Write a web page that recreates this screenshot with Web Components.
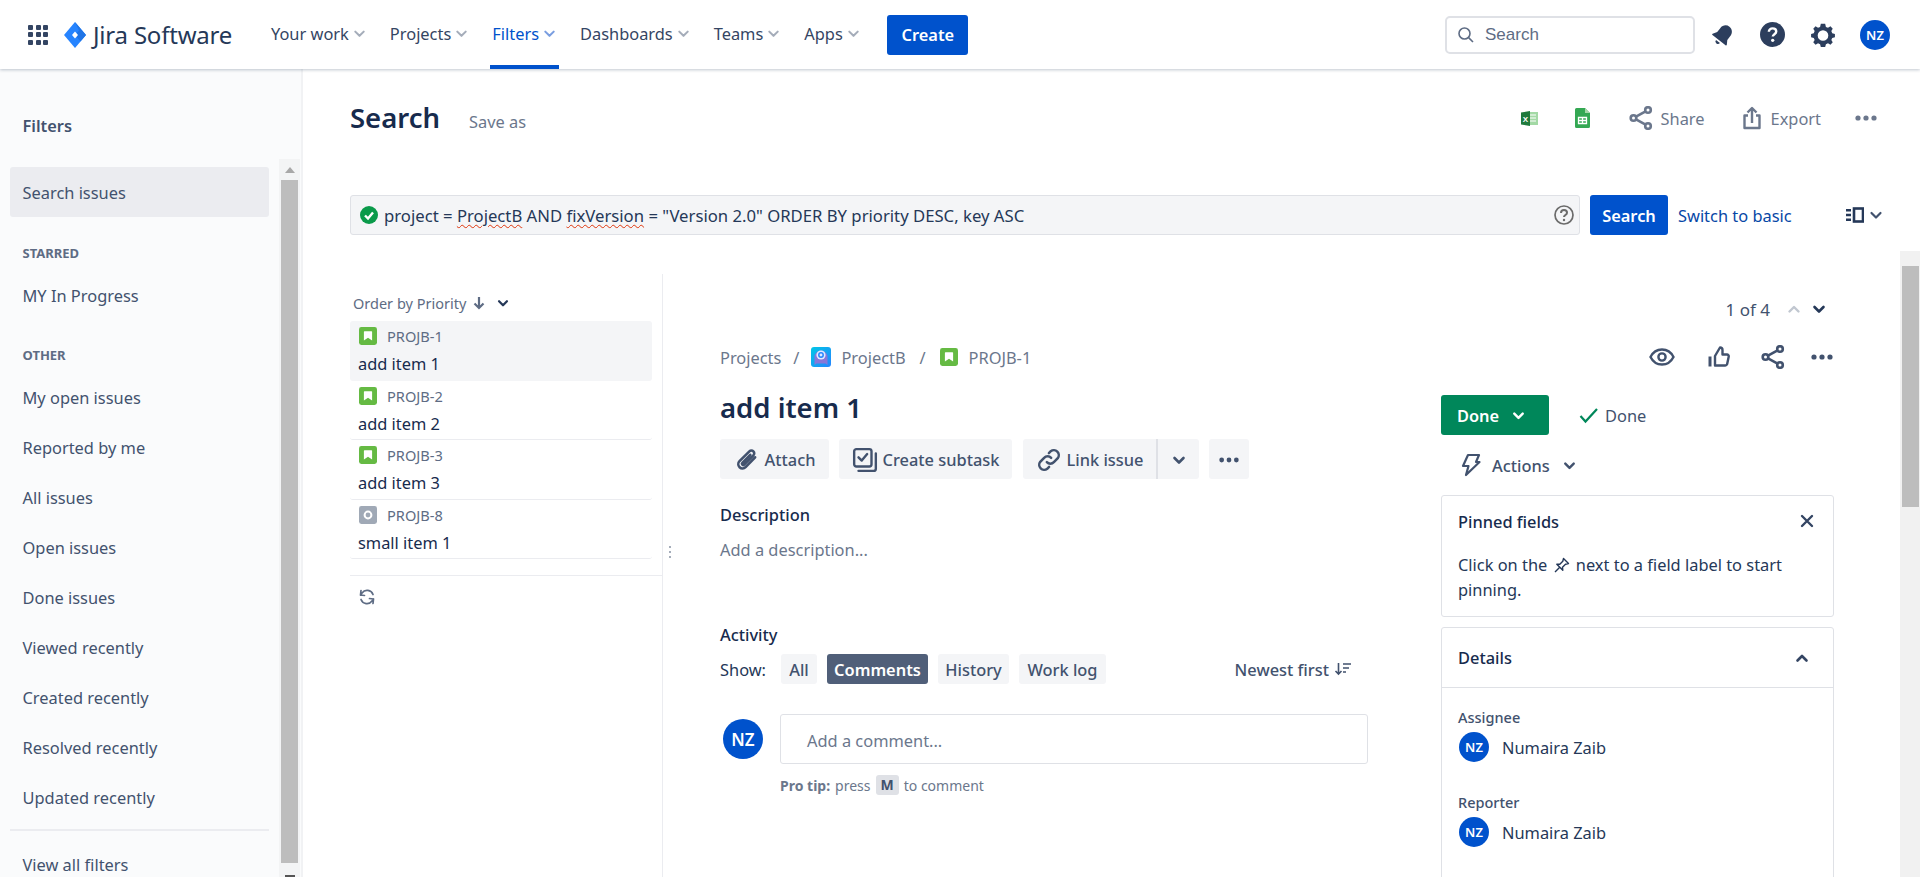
<!DOCTYPE html>
<html>
<head>
<meta charset="utf-8">
<title>Search - Jira</title>
<style>
  html, body { margin: 0; height: 100%; overflow: hidden; background: #fff; }
  body { font-family: "Noto Sans", "Open Sans", sans-serif; font-size: 16.4px; color: #172b4d; display: flex; flex-direction: column; }
  .workspace { flex: 1; display: flex; min-height: 0; }
</style>
</head>
<body>
  <top-nav></top-nav>
  <div class="workspace">
    <filter-sidebar></filter-sidebar>
    <search-page></search-page>
    <page-scrollbar></page-scrollbar>
  </div>

<script>
(() => {
  const chevron = (size = 16, color = "currentColor", width = 2.6, up = false) => `
    <svg width="${size}" height="${size}" viewBox="0 0 16 16" style="flex:none">
      <path d="${up ? "M3.5 10.5 8 6l4.5 4.5" : "M3.5 6 8 10.5 12.5 6"}" fill="none" stroke="${color}" stroke-width="${width}" stroke-linecap="round" stroke-linejoin="round"/>
    </svg>`;

  const dots = (color) => `
    <svg width="24" height="24" viewBox="0 0 24 24" style="flex:none"><g fill="${color}"><circle cx="4" cy="12" r="2.6"/><circle cx="12" cy="12" r="2.6"/><circle cx="20" cy="12" r="2.6"/></g></svg>`;

  const shareIcon = (color, w = 24) => `
    <svg width="${w}" height="${w}" viewBox="0 0 24 24" style="flex:none" fill="none" stroke="${color}" stroke-width="2.6">
      <circle cx="4.5" cy="12" r="2.8"/><circle cx="19" cy="4" r="2.8"/><circle cx="19" cy="20" r="2.8"/>
      <path d="M7 10.6 16.6 5.4M7 13.4l9.6 5.2"/>
    </svg>`;

  const storyIcon = (size = 18) => `
    <svg width="${size}" height="${size}" viewBox="0 0 18 18" style="flex:none">
      <rect width="18" height="18" rx="2.4" fill="#65ba43"/>
      <path d="M5.5 4.2h7a.6.6 0 0 1 .6.6v8.8L9 10.8l-4.1 2.8V4.8a.6.6 0 0 1 .6-.6z" fill="#fff"/>
    </svg>`;

  const taskIcon = `
    <svg width="18" height="18" viewBox="0 0 18 18" style="flex:none">
      <rect width="18" height="18" rx="2.4" fill="#a0a9b6"/>
      <circle cx="9" cy="9" r="3.4" fill="none" stroke="#fff" stroke-width="2"/>
    </svg>`;

  const avatar = (size, fontSize) => `
    <span style="width:${size}px;height:${size}px;border-radius:50%;background:#0052cc;color:#fff;display:inline-flex;align-items:center;justify-content:center;font-size:${fontSize}px;font-weight:600;flex:none">NZ</span>`;

  const define = (name, css, html) => customElements.define(name, class extends HTMLElement {
    connectedCallback() {
      if (this.shadowRoot) return;
      this.attachShadow({ mode: "open" }).innerHTML = `<style>${css}</style>${typeof html === "function" ? html(this) : html}`;
    }
  });

  define("nav-item", `
    :host { display: flex; align-items: center; height: 69px; box-sizing: border-box; padding: 2px 2px 0; gap: 3px; color: #344563; border-bottom: 4px solid transparent; font-size: 16.4px; }
    :host([active]) { color: #0052cc; border-bottom-color: #0052cc; }
    span { white-space: nowrap; }
  `, (el) => `<span><slot></slot></span>${chevron(15, el.hasAttribute("active") ? "#7a9ee0" : "#a5adba", 2.2)}`);

  define("top-nav", `
    :host { display: flex; align-items: center; height: 69px; flex: none; background: #fff; box-shadow: 0 1px 3px rgba(9,30,66,.25); position: relative; z-index: 2; }
    .grid { display: grid; grid-template-columns: repeat(3, 5px); gap: 2.5px; margin-left: 28px; }
    .grid i { width: 5px; height: 5px; background: #344563; border-radius: 1px; }
    .logo { display: flex; align-items: center; gap: 7px; margin-left: 16px; color: #253858; font-size: 24px; width: 188px; white-space: nowrap; letter-spacing: -.2px; }
    .items { display: flex; gap: 19px; margin-left: 17px; }
    .create { margin-left: 24.5px; width: 81px; height: 40px; border-radius: 3px; background: #0052cc; color: #fff; font-weight: 600; font-size: 16.4px; display: flex; align-items: center; justify-content: center; }
    .right { margin-left: auto; display: flex; align-items: center; margin-right: 30px; }
    .search { width: 250px; height: 38px; box-sizing: border-box; border: 2px solid #dfe1e6; border-radius: 5px; display: flex; align-items: center; gap: 10px; padding-left: 10px; color: #5e6c84; font-size: 17px; font-family: "Liberation Sans", sans-serif; margin-right: 16px; }
    .icons { display: flex; align-items: center; }
  `, `
    <div class="grid">${"<i></i>".repeat(9)}</div>
    <div class="logo">
      <svg width="22" height="26" viewBox="0 0 22 26">
        <path d="M11 0 22 13 11 26 0 13z" fill="#2684ff"/><path d="M11 0 22 13 16.5 19.5 11 13 15 8.5z" fill="#1f74e6"/><path d="M11 9.5 14 13l-3 3.5L8 13z" fill="#fff"/>
      </svg>
      <span>Jira Software</span>
    </div>
    <div class="items">
      <nav-item>Your work</nav-item>
      <nav-item>Projects</nav-item>
      <nav-item active>Filters</nav-item>
      <nav-item>Dashboards</nav-item>
      <nav-item>Teams</nav-item>
      <nav-item>Apps</nav-item>
    </div>
    <div class="create">Create</div>
    <div class="right">
      <div class="search">
        <svg width="18" height="18" viewBox="0 0 18 18" fill="none" stroke="#5e6c84" stroke-width="1.6"><circle cx="7.5" cy="7.5" r="5.5"/><path d="m11.6 11.6 4.4 4.4"/></svg>
        <span>Search</span>
      </div>
      <div class="icons">
        <svg width="24" height="24" viewBox="0 0 24 24"><g transform="rotate(38 12 12)"><path d="M12 1.5c-3.8 0-6.4 3-6.4 6.8v4.9L3 17.3c-.3.6.1 1.2.7 1.2h16.6c.6 0 1-.6.7-1.2l-2.600-4.100V8.300c0-3.800-2.600-6.800-6.400-6.800z" fill="#2c3e5d"/><path d="M9.500 20.200h5a2.500 2.500 0 0 1-5 0z" fill="#2c3e5d"/></g></svg>
        <svg style="margin-left:25px" width="25" height="25" viewBox="0 0 26 26"><circle cx="13" cy="13" r="13" fill="#2c3e5d"/><path d="M9.200 10.200c0-2.200 1.700-3.600 3.900-3.600s3.800 1.300 3.800 3.300c0 2.800-3.600 2.800-3.600 5.300" fill="none" stroke="#fff" stroke-width="2.500"/><circle cx="13.200" cy="19" r="1.700" fill="#fff"/></svg>
        <svg style="margin-left:25px" width="26" height="26" viewBox="0 0 24 24"><path fill="#2c3e5d" fill-rule="evenodd" d="M10 1.600h4l.7 2.900 1.900.8 2.300-1.300 2.100 2.200-1.300 2.200.8 1.900 2.500.7v3l-2.500.7-.8 1.900 1.300 2.200-2.100 2.200-2.300-1.300-1.900.8-.7 2.500h-4l-.7-2.500-1.900-.8-2.300 1.300-2.100-2.200 1.300-2.200-.8-1.900-2.500-.7v-3l2.500-.7.8-1.900-1.300-2.200 2.100-2.200 2.300 1.300 1.900-.8zM12 7.600a4.900 4.900 0 1 0 0 9.800 4.900 4.900 0 0 0 0-9.800z"/></svg>
        <span style="margin-left:24px;display:flex">${avatar(30, 13)}</span>
      </div>
    </div>
  `);

  define("side-link", `
    :host { display: flex; align-items: center; height: 50px; padding-left: 22.5px; color: #42526e; font-size: 16.4px; white-space: nowrap; }
  `, `<slot></slot>`);

  define("side-heading", `
    :host { display: block; padding-left: 22.5px; color: #5e6c84; font-size: 13px; font-weight: 700; line-height: 18px; }
  `, `<slot></slot>`);

  define("filter-sidebar", `
    :host { width: 303px; flex: none; box-sizing: border-box; background: #fafbfc; border-right: 2px solid #f1f2f4; display: flex; overflow: hidden; position: relative; }
    .col { width: 259px; margin-left: 10px; flex: none; }
    .title { padding: 45px 0 0 12.5px; height: 98px; box-sizing: border-box; line-height: 24px; font-weight: 600; color: #42526e; font-size: 16.4px; }
    .pill { background: #ebecf0; border-radius: 3px; height: 50px; margin: 0 0 27px; padding-left: 12.5px; }
    side-link, side-heading { margin-left: -10px; }
    .gap-a { height: 8px; }
    .gap-b { height: 26px; }
    hr { border: 0; height: 2px; background: #ebecf0; margin: 7px 0 0; }
    .last { height: 24px; margin-top: 21px; }
    .bar { position: absolute; left: 279px; top: 90px; bottom: 0; width: 21px; background: #f3f4f5; display: flex; flex-direction: column; align-items: center; }
    .up { height: 21px; flex: none; display: flex; align-items: center; justify-content: center; }
    .thumb { width: 17px; height: 683px; background: #bdbdbd; flex: none; }
    .tri { width: 0; height: 0; border: 5px solid transparent; border-bottom: 6px solid #a8a8a8; border-top: 0; }
    .down { width: 10px; height: 2px; background: #555; margin-top: 12px; }
  `, `
    <div class="col">
      <div class="title">Filters</div>
      <side-link class="pill">Search issues</side-link>
      <side-heading>STARRED</side-heading>
      <div class="gap-a"></div>
      <side-link>MY In Progress</side-link>
      <div class="gap-b"></div>
      <side-heading>OTHER</side-heading>
      <div class="gap-a"></div>
      <side-link>My open issues</side-link>
      <side-link>Reported by me</side-link>
      <side-link>All issues</side-link>
      <side-link>Open issues</side-link>
      <side-link>Done issues</side-link>
      <side-link>Viewed recently</side-link>
      <side-link>Created recently</side-link>
      <side-link>Resolved recently</side-link>
      <side-link>Updated recently</side-link>
      <hr>
      <side-link class="last">View all filters</side-link>
    </div>
    <div class="bar"><div class="up"><div class="tri"></div></div><div class="thumb"></div><div class="down"></div></div>
  `);

  define("page-scrollbar", `
    :host { width: 20px; flex: none; margin-top: 182px; background: #f1f1f1; display: flex; flex-direction: column; align-items: center; }
    .up { height: 15px; }
    .thumb { width: 17px; height: 241px; background: #bdbdbd; }
  `, `<div class="up"></div><div class="thumb"></div>`);

  define("issue-row", `
    :host { display: block; height: 59.4px; box-sizing: border-box; border-bottom: 1px solid #ebecf0; padding: 6px 8px 0; border-radius: 3px; }
    :host([selected]) { background: #f4f5f7; border-bottom-color: transparent; height: 60px; }
    .key { display: flex; align-items: center; gap: 10px; height: 18px; padding-left: 1px; color: #5e6c84; font-size: 14.6px; }
    .sum { font-size: 16.4px; line-height: 24px; margin-top: 7px; color: #172b4d; }
  `, (el) => `
    <div class="key">${el.getAttribute("type") === "task" ? taskIcon : storyIcon()}<span>${el.getAttribute("key")}</span></div>
    <div class="sum"><slot></slot></div>
  `);

  define("issue-list", `
    :host { display: flex; flex-direction: column; width: 313px; flex: none; box-sizing: border-box; border-right: 1px solid #ebecf0; }
    .order { display: flex; align-items: center; gap: 6px; height: 47px; padding: 11px 0 0 3px; box-sizing: border-box; color: #5e6c84; font-size: 14.5px; }
    .rows { width: 302px; }
    .foot { border-top: 1px solid #ebecf0; margin-top: 16px; padding: 12px 0 0 8px; }
  `, `
    <div class="order">
      <span>Order by Priority</span>
      <svg width="14" height="14" viewBox="0 0 14 14" fill="none" stroke="#5e6c84" stroke-width="2.2"><path d="M7 1v11M2.5 7.5 7 12l4.5-4.5"/></svg>
      <span style="margin-left:4px;display:flex">${chevron(14, "#253858", 2.6)}</span>
    </div>
    <div class="rows">
      <issue-row key="PROJB-1" selected>add item 1</issue-row>
      <issue-row key="PROJB-2">add item 2</issue-row>
      <issue-row key="PROJB-3">add item 3</issue-row>
      <issue-row key="PROJB-8" type="task">small item 1</issue-row>
    </div>
    <div class="foot">
      <svg width="18" height="18" viewBox="0 0 18 18" fill="none" stroke="#5e6c84" stroke-width="1.7" stroke-linecap="round" stroke-linejoin="round">
        <path d="M15 6.500A6.300 6.300 0 0 0 4 5L2.500 7M3 2.500 2.500 7 6.500 7.500"/><path d="M3 11.500A6.300 6.300 0 0 0 14 13l1.500-2M15 15.500l.5-4.500-4-.5"/>
      </svg>
    </div>
  `);

  define("tool-button", `
    :host { display: flex; align-items: center; justify-content: center; gap: 5px; height: 40px; background: #f4f5f7; border-radius: 3px; color: #42526e; font-weight: 500; font-size: 16.4px; white-space: nowrap; box-sizing: border-box; padding-top: 1px; }
  `, `<slot></slot>`);

  define("activity-tab", `
    :host { display: flex; align-items: center; justify-content: center; height: 30px; background: #f4f5f7; border-radius: 3px; color: #42526e; font-weight: 500; font-size: 16.4px; }
    :host([active]) { background: #505f79; color: #fff; font-weight: 600; }
  `, `<slot></slot>`);

  define("issue-main", `
    :host { display: block; width: 648px; flex: none; }
    .crumbs { display: flex; align-items: center; height: 26px; box-sizing: border-box; padding-bottom: 2px; color: #6b778c; font-size: 16.4px; }
    .crumbs .sep { text-align: center; }
    h1 { margin: 17px 0 0; font-size: 27.5px; font-weight: 600; line-height: 40px; color: #172b4d; }
    .tools { display: flex; gap: 10px; margin-top: 11px; }
    .join { display: flex; margin-left: 1px; }
    h2 { margin: 0; font-size: 16.4px; font-weight: 500; line-height: 24px; color: #172b4d; }
    .desc { color: #6b778c; line-height: 24px; margin-top: 11px; }
    .show { display: flex; align-items: center; margin-top: 7px; height: 30px; }
    .show .lbl { width: 61px; color: #253858; }
    .tabs { display: flex; gap: 10px; }
    .newest { margin-left: auto; display: flex; align-items: center; gap: 5px; color: #42526e; font-weight: 500; margin-right: 16px; }
    .comment { display: flex; margin-top: 30px; }
    .box { margin-left: 17px; width: 589px; height: 50px; box-sizing: border-box; border: 1px solid #dfe1e6; border-radius: 3px; padding: 2px 0 0 26px; display: flex; align-items: center; color: #6b778c; }
    .tip { margin: 10px 0 0 60px; height: 22px; display: flex; align-items: center; gap: 5px; font-size: 14px; color: #6b778c; }
    kbd { font: inherit; font-weight: 700; background: #dfe1e6; color: #42526e; border-radius: 3px; padding: 0 5px; height: 20px; line-height: 20px; }
    b { font-weight: 700; }
  `, `
    <div class="crumbs">
      <span>Projects</span><span class="sep" style="width:30px">/</span>
      <svg width="20" height="20" viewBox="0 0 20 20" style="flex:none;margin-right:10px">
        <defs><linearGradient id="pb" x1="0" y1="0" x2="1" y2="1"><stop offset="0" stop-color="#00c7e6"/><stop offset="1" stop-color="#2684ff"/></linearGradient></defs>
        <rect width="20" height="20" rx="3" fill="url(#pb)"/>
        <path d="M3.500 18V10a6.500 6.500 0 0 1 13 0v8l-2-1.500h-9z" fill="#8777d9"/>
        <circle cx="10" cy="8" r="4.600" fill="#deebff"/><circle cx="10" cy="8" r="2.200" fill="none" stroke="#2684ff" stroke-width="1.500"/>
      </svg>
      <span>ProjectB</span><span class="sep" style="width:34px">/</span>
      ${storyIcon(18)}
      <span style="margin-left:11px">PROJB-1</span>
    </div>
    <h1>add item 1</h1>
    <div class="tools">
      <tool-button style="width:109px">
        <svg width="26" height="26" viewBox="0 0 24 24" fill="none" stroke="#42526e" stroke-width="2.400" stroke-linecap="round"><path d="M19.500 9.500 10.700 18.600a3.900 3.900 0 0 1-5.600-5.500L14.200 4a2.600 2.600 0 0 1 3.700 3.700L9.400 16.300a1.200 1.200 0 0 1-1.700-1.700L15 7.200"/></svg>
        Attach
      </tool-button>
      <tool-button style="width:173px">
        <svg width="26" height="26" viewBox="0 0 24 24" fill="none" stroke="#42526e" stroke-width="2.200" stroke-linejoin="round"><rect x="2" y="2" width="16" height="16" rx="2"/><path d="m6 9.500 3 3 5-6M22 6v14a2 2 0 0 1-2 2H6" stroke-linecap="round"/></svg>
        Create subtask
      </tool-button>
      <div class="join">
        <tool-button style="width:135px;border-right:2px solid #dfe1e6;border-radius:3px 0 0 3px">
          <svg width="26" height="26" viewBox="0 0 24 24" fill="none" stroke="#42526e" stroke-width="2.300" stroke-linecap="round"><path d="M10 14a4.500 4.500 0 0 0 6.500 0l3.600-3.700a4.600 4.600 0 0 0-6.500-6.400l-1.700 1.700"/><path d="M14 10a4.500 4.500 0 0 0-6.500 0l-3.600 3.700a4.600 4.600 0 0 0 6.500 6.400l1.700-1.700"/></svg>
          Link issue
        </tool-button>
        <tool-button style="width:41px;border-radius:0 3px 3px 0">${chevron(16, "#42526e", 2.6)}</tool-button>
      </div>
      <tool-button style="width:40px"><svg width="22" height="22" viewBox="0 0 24 24"><g fill="#42526e"><circle cx="4" cy="12" r="2.600"/><circle cx="12" cy="12" r="2.600"/><circle cx="20" cy="12" r="2.600"/></g></svg></tool-button>
    </div>
    <h2 style="margin-top:24px">Description</h2>
    <div class="desc">Add a description...</div>
    <h2 style="margin-top:61px">Activity</h2>
    <div class="show">
      <span class="lbl">Show:</span>
      <div class="tabs">
        <activity-tab style="width:36px">All</activity-tab>
        <activity-tab style="width:101px" active>Comments</activity-tab>
        <activity-tab style="width:71px">History</activity-tab>
        <activity-tab style="width:87px">Work log</activity-tab>
      </div>
      <div class="newest">
        Newest first
        <svg width="18" height="18" viewBox="0 0 18 18" fill="none" stroke="#42526e" stroke-width="1.600"><path d="M4.500 3v11M1.500 11l3 3 3-3M9 4h8M9 8h6M9 12h3"/></svg>
      </div>
    </div>
    <div class="comment">
      <span style="margin:5px 0 0 3px;display:flex">${avatar(40, 17)}</span>
      <div class="box">Add a comment...</div>
    </div>
    <div class="tip"><b>Pro tip:</b> press <kbd>M</kbd> to comment</div>
  `);

  define("field-person", `
    :host { display: block; }
    .lbl { font-size: 14.5px; color: #42526e; line-height: 20px; font-weight: 500; }
    .who { display: flex; align-items: center; gap: 13px; margin: 5px 0 0 1px; color: #253858; font-size: 16.4px; }
  `, (el) => `<div class="lbl">${el.getAttribute("label")}</div><div class="who">${avatar(30, 13)}<slot></slot></div>`);

  define("issue-side", `
    :host { display: block; width: 393px; flex: none; margin-left: 73px; }
    .acts { display: flex; justify-content: flex-end; align-items: center; height: 24px; }
    .status { display: flex; align-items: center; margin-top: 26px; }
    .done { width: 108px; height: 40px; background: #00875a; color: #fff; border-radius: 3px; display: flex; align-items: center; gap: 12px; padding-left: 16px; box-sizing: border-box; font-weight: 600; }
    .res { display: flex; align-items: center; gap: 6px; margin-left: 30px; color: #42526e; }
    .actions { display: flex; align-items: center; height: 24px; margin: 18px 0 0 20px; color: #42526e; font-weight: 500; }
    .card { border: 1px solid #dfe1e6; border-radius: 3px; box-sizing: border-box; }
    .pinned { margin-top: 18px; height: 122px; padding: 13px 19px 13px 16px; }
    .head { display: flex; justify-content: space-between; align-items: center; font-weight: 500; height: 24px; color: #172b4d; }
    .pinned p { margin: 20px 0 0; line-height: 24.5px; color: #253858; }
    .details { margin-top: 10px; height: 400px; }
    .details .head { height: 59px; padding: 0 23px 0 16px; border-bottom: 1px solid #dfe1e6; }
    .fields { padding: 19px 16px; display: flex; flex-direction: column; gap: 30px; }
  `, `
    <div class="acts">
      <svg style="margin-right:33px" width="26" height="26" viewBox="0 0 26 26" fill="none" stroke="#42526e" stroke-width="2.400"><path d="M1.500 13C4 8 8 5.500 13 5.500S22 8 24.500 13C22 18 18 20.500 13 20.500S4 18 1.500 13z"/><circle cx="13" cy="13" r="3.600"/></svg>
      <svg style="margin-right:31px" width="22" height="24" viewBox="0 0 22 24" fill="none" stroke="#42526e" stroke-width="2.400" stroke-linejoin="round"><path d="M7 11 12 2.500c1.500 0 2.500 1 2.500 2.500v4.500H19a1.800 1.800 0 0 1 1.700 2.200l-1.600 7.500a2 2 0 0 1-2 1.300H7z"/><path d="M2 11.500v10" stroke-width="3"/></svg>
      <span style="margin-right:25px;display:flex">${shareIcon("#42526e", 24)}</span>
      ${dots("#42526e")}
    </div>
    <div class="status">
      <div class="done">Done ${chevron(15, "#fff", 2.6)}</div>
      <div class="res">
        <svg width="20" height="20" viewBox="0 0 20 20" fill="none" stroke="#00875a" stroke-width="2.200"><path d="m1.500 11 5 5.500L18 4"/></svg>
        Done
      </div>
    </div>
    <div class="actions">
      <svg width="20" height="24" viewBox="0 0 20 24" fill="none" stroke="#42526e" stroke-width="2.200" stroke-linejoin="round"><path d="M7 2h11l-3 7h3.500L5 22l2.500-9H2z"/></svg>
      <span style="margin-left:11px">Actions</span>
      <span style="margin-left:12px;display:flex">${chevron(15, "#42526e", 2.6)}</span>
    </div>
    <div class="card pinned">
      <div class="head">Pinned fields
        <svg width="14" height="14" viewBox="0 0 14 14" stroke="#344563" stroke-width="2.400" stroke-linecap="round"><path d="m2 2 10 10M12 2 2 12"/></svg>
      </div>
      <p>Click on the
        <svg width="16" height="16" viewBox="0 0 16 16" fill="none" stroke="#253858" stroke-width="1.400" stroke-linejoin="round" style="vertical-align:-2px;margin:0 2px"><path d="m9.500 1.500 5 5-3 .8-3 3 .3 3L2.800 7.300l3-.1 3-3zM5.500 10.500 1 15"/></svg>
        next to a field label to start pinning.</p>
    </div>
    <div class="card details">
      <div class="head">Details ${chevron(16, "#344563", 2.6, true)}</div>
      <div class="fields">
        <field-person label="Assignee">Numaira Zaib</field-person>
        <field-person label="Reporter">Numaira Zaib</field-person>
      </div>
    </div>
  `);

  define("issue-detail", `
    :host { display: block; flex: 1; min-width: 0; position: relative; padding-left: 57px; overflow: hidden; }
    .pager { display: flex; justify-content: flex-end; align-items: center; gap: 16px; height: 26px; margin: 22px 0 23px; padding-right: 73px; color: #42526e; font-size: 17px; }
    .cols { display: flex; }
    .grip { position: absolute; left: 6px; top: 272px; display: grid; gap: 3px; }
    .grip i { width: 2px; height: 2px; background: #a5adba; }
  `, `
    <div class="grip"><i></i><i></i><i></i></div>
    <div class="pager">
      <span>1 of 4</span>
      <span style="display:flex;gap:9px">${chevron(16, "#c1c7d0", 2.4, true)}${chevron(16, "#253858", 2.6)}</span>
    </div>
    <div class="cols">
      <issue-main></issue-main>
      <issue-side></issue-side>
    </div>
  `);

  define("search-page", `
    :host { flex: 1; min-width: 0; display: flex; flex-direction: column; padding-left: 47px; overflow: hidden; }
    .head { display: flex; align-items: center; height: 42px; margin-top: 28px; flex: none; }
    h1 { margin: 0; font-size: 27.5px; font-weight: 600; color: #172b4d; line-height: 42px; }
    .save { margin: 7px 0 0 29px; color: #6b778c; font-size: 16.4px; }
    .tools { margin-left: auto; display: flex; align-items: center; color: #6b778c; padding-right: 22px; }
    .jql { display: flex; align-items: center; margin-top: 56px; height: 40px; flex: none; }
    .input { width: 1230px; height: 40px; box-sizing: border-box; background: #f4f5f7; border: 1px solid #dfe1e6; border-radius: 3px; display: flex; align-items: center; padding: 0 5px 0 9px; gap: 6px; color: #253858; white-space: nowrap; font-size: 16.7px; }
    .input u { text-decoration: underline wavy #de350b 1px; text-underline-offset: 2px; }
    .input svg:last-child { margin-left: auto; }
    .btn { width: 78px; height: 40px; margin-left: 10px; background: #0052cc; color: #fff; font-weight: 600; border-radius: 3px; display: flex; align-items: center; justify-content: center; }
    .basic { color: #0747a6; margin-left: 10px; }
    .view { margin-left: auto; margin-right: 16px; display: flex; align-items: center; gap: 4px; }
    .split { display: flex; flex: 1; margin-top: 39px; min-height: 0; }
  `, `
    <div class="head">
      <h1>Search</h1>
      <span class="save">Save as</span>
      <div class="tools">
        <svg width="17" height="17" viewBox="0 0 17 17"><rect x="6" y="2" width="11" height="13" fill="#a3d9a5"/><path d="M9 5h6M9 8h6M9 11h6" stroke="#fff"/><path d="M0 2.500 9 1v15L0 14.500z" fill="#1f7a3d"/><text x="1.700" y="11.500" font-size="8" font-weight="700" fill="#fff" font-family="Liberation Sans">X</text></svg>
        <svg style="margin-left:37px" width="15" height="20" viewBox="0 0 15 20"><path d="M1.500 0H10l5 5v13.500a1.500 1.500 0 0 1-1.500 1.500h-12A1.500 1.500 0 0 1 0 18.500v-17A1.500 1.500 0 0 1 1.500 0z" fill="#34a853"/><path d="M10 0v5h5z" fill="#a5d6a7"/><path d="M3.500 9.500h8v6h-8zM3.500 12.500h8M7.500 9.500v6" fill="none" stroke="#fff" stroke-width="1.300"/></svg>
        <span style="margin-left:39px;display:flex">${shareIcon("#6b778c", 24)}</span>
        <span style="margin-left:8px">Share</span>
        <svg style="margin-left:38px" width="18" height="24" viewBox="0 0 18 24" fill="none" stroke="#6b778c" stroke-width="2.400" stroke-linejoin="round"><path d="M5 9.500H1.500v12.500h15V9.500H13"/><path d="M9 17V2M4.500 6.500 9 2l4.500 4.500"/></svg>
        <span style="margin-left:10px">Export</span>
        <span style="margin-left:33px;display:flex">${dots("#6b778c")}</span>
      </div>
    </div>
    <div class="jql">
      <div class="input">
        <svg width="18" height="18" viewBox="0 0 18 18" style="flex:none"><circle cx="9" cy="9" r="9" fill="#0a9a4a"/><path d="m5 9.500 3 3 5-6" fill="none" stroke="#fff" stroke-width="2.400"/></svg>
        <span>project = <u>ProjectB</u> AND <u>fixVersion</u> = "Version 2.0" ORDER BY priority DESC, key ASC</span>
        <svg width="20" height="20" viewBox="0 0 20 20" fill="none" stroke="#6b6b6b" stroke-width="1.700"><circle cx="10" cy="10" r="9"/><path d="M7 8c0-1.800 1.300-3 3-3s3 1.100 3 2.700c0 2.300-3 2.300-3 4.300" stroke-width="2"/><circle cx="10" cy="15" r="1.200" fill="#6b6b6b" stroke="none"/></svg>
      </div>
      <div class="btn">Search</div>
      <span class="basic">Switch to basic</span>
      <div class="view">
        <svg width="18" height="16" viewBox="0 0 18 16"><path d="M0 2h5v2.400H0zM0 6.800h5v2.400H0zM0 11.600h5V14H0z" fill="#253858"/><rect x="8" y="1.500" width="9" height="13" fill="none" stroke="#253858" stroke-width="2.600"/></svg>
        ${chevron(16, "#42526e", 2.2)}
      </div>
    </div>
    <div class="split">
      <issue-list></issue-list>
      <issue-detail></issue-detail>
    </div>
  `);
})();
</script>
</body>
</html>
